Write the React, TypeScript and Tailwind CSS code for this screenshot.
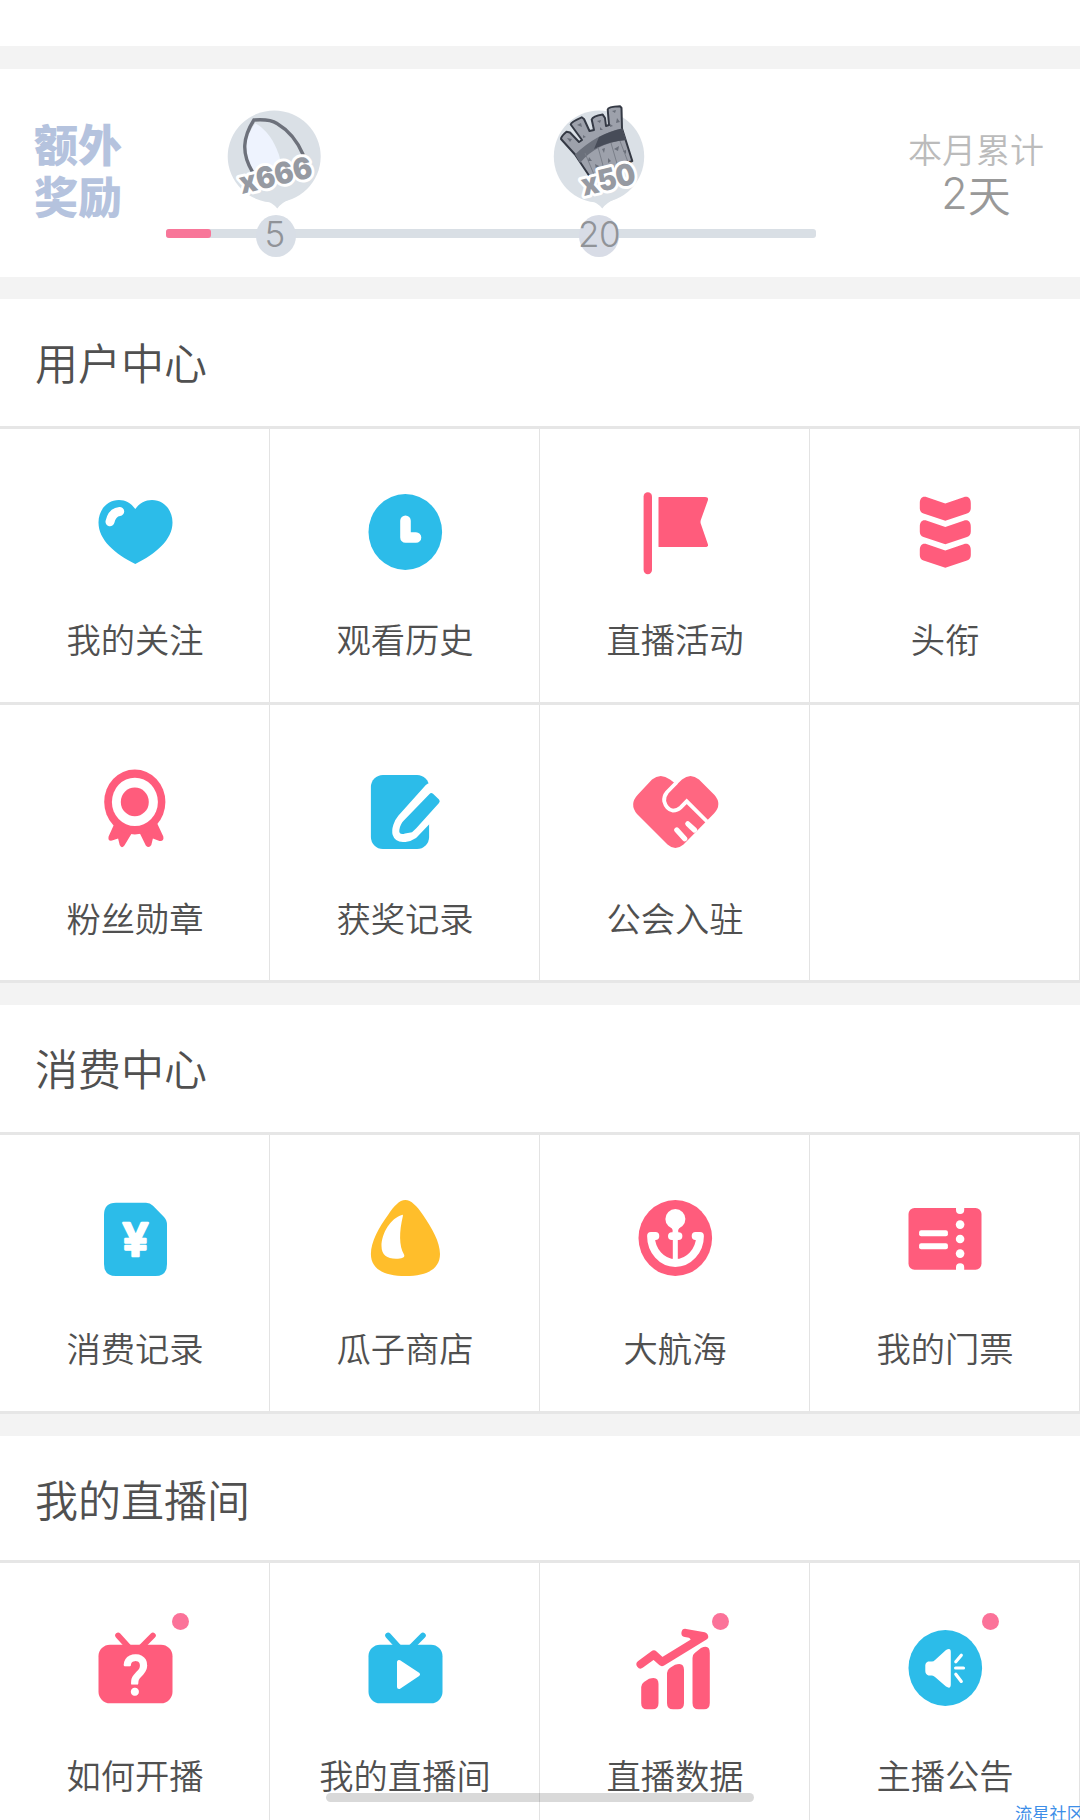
import React from 'react';

const PINK = '#ff5c7c';
const BLUE = '#2cbce9';

interface MenuItem {
  label: string;
  icon: React.ReactNode;
  dot?: boolean;
}

interface MenuRow {
  items: MenuItem[];
  // rows differ by a pixel or two in height and label spacing
  rowClass: string;
  labelClass: string;
}

interface MenuSectionProps {
  title: string;
  headerClass: string;
  rows: MenuRow[];
}

const Icon: React.FC<{ children: React.ReactNode }> = ({ children }) => (
  <svg width="99" height="100" viewBox="0 0 99 100" fill="none" className="block overflow-visible">
    {children}
  </svg>
);

const HeartIcon = () => (
  <Icon>
    <path
      d="M50.3 26C46 20 40.5 17 34 17C22 17 13.5 27 13.5 39.5C13.5 57 30 71 50.3 81C70.5 71 87.5 57 87.5 39.5C87.5 27 79 17 67 17C60.5 17 54.5 20 50.3 26Z"
      fill={BLUE}
    />
    <path d="M25 38.8C26.5 32 29.5 29 34.7 28.5" stroke="#fff" strokeWidth="9" strokeLinecap="round" />
  </Icon>
);

const ClockIcon = () => (
  <Icon>
    <ellipse cx="50.3" cy="49" rx="36.8" ry="38" fill={BLUE} />
    <path d="M50.5 37.8V54.5H61" stroke="#fff" strokeWidth="10.6" strokeLinecap="round" strokeLinejoin="round" />
  </Icon>
);

const FlagIcon = () => (
  <Icon>
    <rect x="18.6" y="9.3" width="8.4" height="82" rx="4.2" fill={PINK} />
    <path
      d="M34 14H80Q84 14 82.8 17.5L75.8 37Q75.2 38.9 75.8 40.7L82.8 61Q84 64 80 64H34Q33.5 64 33.5 63.5V14.5Q33.5 14 34 14Z"
      fill={PINK}
    />
  </Icon>
);

const Chevron: React.FC<{ y: number }> = ({ y }) => (
  <path
    transform={`translate(0 ${y})`}
    d="M24.8 20.5C24.8 15 27.5 12.8 32 14.3L50.3 20.5L68.6 14.3C73 12.8 75.8 15 75.8 20.5V25C75.8 28 74.5 29.7 72 30.5L50.3 37.7L28.5 30.5C26 29.7 24.8 28 24.8 25Z"
    fill={PINK}
  />
);

const RankIcon = () => (
  <Icon>
    <Chevron y={0} />
    <Chevron y={23.5} />
    <Chevron y={47} />
  </Icon>
);

const MedalIcon = () => (
  <Icon>
    <path
      d="M29.7 64L23.6 77.5Q22.6 82.4 27 81.6L33.1 79.6L34.7 86Q36.5 90 39.4 86.6L46.8 74.3H54.8L60.8 86.4Q63.9 90 66.3 86L67.9 79.6L74.5 82Q79.3 82.6 78.3 77.6L72 64Z"
      fill={PINK}
    />
    <ellipse cx="49.8" cy="43" rx="30.6" ry="32.4" fill={PINK} />
    <ellipse cx="49.9" cy="42.9" rx="23" ry="24.2" fill="#fff" />
    <ellipse cx="49.8" cy="42.9" rx="14" ry="14.4" fill={PINK} />
  </Icon>
);

const EditIcon = () => (
  <Icon>
    <rect x="15.9" y="16" width="58.2" height="74" rx="12" fill={BLUE} />
    <path
      d="M75.8 31L48.5 61.5C45.5 65 43.6 71 44.4 74C45.5 77.5 53 76 57 73.2L87 42Z"
      fill={BLUE}
      stroke="#fff"
      strokeWidth="14"
      strokeLinejoin="round"
    />
    <path
      d="M74.5 35Q76.1 33 78 34.8L84 40.4Q85.5 42 84 44L61 69.5L57 73.3L50 74.6C46 76 43.6 74.5 44.4 70.5C45 67 46.4 64 48.6 61.7Z"
      fill={BLUE}
    />
  </Icon>
);

const HandshakeIcon = () => (
  <Icon>
    <path
      d="M50.3 24.5L45 20.5Q35.5 13.5 27 20.5L12.5 36Q4 45.3 12 55L42.5 85.5Q50.3 92.5 58.5 85.5L89 54.5Q97.5 45.3 89.5 36L74 20.5Q65.5 13.5 57 20.5L50.3 27Z"
      fill="#ff6781"
    />
    <path d="M47 20L50.3 24.3L55 21L52 16Z" fill="#fff" />
    <path
      d="M51.5 23.5L42 33.2Q38.5 37.5 39.2 42.3Q41.3 50.5 48 51.7Q52.5 51.5 55.5 48.6L61.7 42.3L83 63.5"
      stroke="#fff"
      strokeWidth="3.8"
    />
    <path d="M51.8 71L59.7 79.8M62.8 64.8L69.5 71" stroke="#fff" strokeWidth="5.2" strokeLinecap="round" />
  </Icon>
);

const BillIcon = () => (
  <Icon>
    <path
      d="M31 13.7H61Q65 13.7 68 16.8L79 28Q82 31 82 36V75Q82 87 70.5 87H31Q19 87 19 75V26Q19 13.7 31 13.7Z"
      fill={BLUE}
    />
    <text
      x="50.5"
      y="67"
      textAnchor="middle"
      fontFamily="Roboto, sans-serif"
      fontWeight="500"
      fontSize="47"
      fill="#fff"
      stroke="#fff"
      strokeWidth="2.6"
      strokeLinejoin="round"
    >
      ¥
    </text>
  </Icon>
);

const SeedIcon = () => (
  <Icon>
    <path
      d="M50.3 11C56 11 62 17 68 26C77 39 85 53 85 65C85 80 72 87 50.5 87C29 87 15.9 80 15.9 65C15.9 53 24 38 33 26C39 17 44.5 11 50.3 11Z"
      fill="#ffbe2b"
    />
    <path
      d="M46.8 25.9C36 29 26.5 44 26.5 57C26.5 66 32 69.7 41 69.7C46.5 69.7 50.5 68.6 49 65.5C44 57 44 43 47.9 27Q48.2 25.4 46.8 25.9Z"
      fill="#fff"
    />
  </Icon>
);

const AnchorIcon = () => (
  <Icon>
    <ellipse cx="50.3" cy="49" rx="36.8" ry="38" fill={PINK} />
    <circle cx="50.4" cy="30" r="10" fill="#fff" />
    <path d="M46 38Q48 40 47.5 44H53.3Q52.8 40 55 38Z" fill="#fff" />
    <rect x="43" y="43.2" width="14.4" height="7.8" rx="3.9" fill="#fff" />
    <path d="M50.3 49V73" stroke="#fff" strokeWidth="5" />
    <path
      d="M30.4 47H26C26 62 37 74 50.3 74C63.6 74 75 62 75 47H70.6"
      stroke="#fff"
      strokeWidth="7.8"
      strokeLinecap="round"
      strokeLinejoin="round"
    />
  </Icon>
);

const TicketIcon = () => (
  <Icon>
    <rect x="13.5" y="19" width="73" height="61.7" rx="6" fill={PINK} />
    <path d="M61 18H69.2V21A4.1 4.1 0 0 1 61 21ZM61 81.5H69.2V78.3A4.1 4.1 0 0 0 61 78.3Z" fill="#fff" />
    <circle cx="65.1" cy="35.6" r="4.3" fill="#fff" />
    <circle cx="65.1" cy="50" r="4.3" fill="#fff" />
    <circle cx="65.1" cy="64.6" r="4.3" fill="#fff" />
    <rect x="24.1" y="41.3" width="28.8" height="6" rx="2" fill="#fff" />
    <rect x="24.1" y="54.3" width="28.8" height="6" rx="2" fill="#fff" />
  </Icon>
);

const Television: React.FC<{ color: string; children: React.ReactNode }> = ({ color, children }) => (
  <Icon>
    <path d="M33.1 18.5L43.5 30M67.9 18.5L56.5 30" stroke={color} strokeWidth="5.8" strokeLinecap="round" />
    <rect x="13.5" y="27.7" width="74" height="58.6" rx="11.5" fill={color} />
    {children}
  </Icon>
);

const HowToIcon = () => (
  <Television color={PINK}>
    <text
      x="50.6"
      y="77"
      textAnchor="middle"
      fontFamily="Roboto, sans-serif"
      fontWeight="400"
      fontSize="53"
      fill="#fff"
      stroke="#fff"
      strokeWidth="2.4"
      strokeLinejoin="round"
    >
      ?
    </text>
  </Television>
);

const RoomIcon = () => (
  <Television color={BLUE}>
    <path d="M44 45V70L63 57.4Z" fill="#fff" stroke="#fff" strokeWidth="4" strokeLinejoin="round" />
  </Television>
);

const ChartIcon = () => (
  <Icon>
    <path d="M16.2 70Q16.2 67 19 65L24 61.8Q33.5 58.5 33.5 67V86Q33.5 92.3 27.5 92.3H22Q16.2 92.3 16.2 86Z" fill={PINK} />
    <path d="M42 56Q42 53 44.8 51L50 47.8Q59 44.5 59 53V86Q59 92.3 53 92.3H48Q42 92.3 42 86Z" fill={PINK} />
    <path d="M67.5 41Q67.5 37.5 70 35.8L76 31Q84.8 27 84.8 36V86Q84.8 92.3 79 92.3H73.5Q67.5 92.3 67.5 86Z" fill={PINK} />
    <path
      d="M15.6 47.3L28.8 37.6L37 45L79 19.3L60.5 16"
      stroke={PINK}
      strokeWidth="8.2"
      strokeLinecap="round"
      strokeLinejoin="round"
    />
    <path d="M60.5 16L79 19.3L68 25.5Z" fill={PINK} />
  </Icon>
);

const NoticeIcon = () => (
  <Icon>
    <ellipse cx="50.3" cy="51" rx="36.8" ry="38" fill={BLUE} />
    <path
      d="M33 44.5H37Q38.5 44.5 40 43L51 33Q55.8 30 55.8 35V67.5Q55.8 72.5 51 69.5L40 60Q38.5 58.5 37 58.5H33.5Q30.3 57 30.3 54V48Q30.3 45.5 33 44.5Z"
      fill="#fff"
    />
    <path d="M60.8 44.8L66.3 38.2M60.6 51H68.5M60.8 57.3L66.3 64.4" stroke="#fff" strokeWidth="3.2" strokeLinecap="round" />
  </Icon>
);

const PrizeText: React.FC<{ x: number; y: number; length: number; children: string }> = ({ x, y, length, children }) => (
  <text
    x={x}
    y={y}
    transform={`rotate(-13.5 ${x} ${y})`}
    textLength={length}
    lengthAdjust="spacingAndGlyphs"
    fontFamily="Inter, sans-serif"
    fontWeight="900"
    fontSize="30"
    fill="#969aa2"
    stroke="#fff"
    strokeWidth="6"
    strokeLinejoin="round"
    paintOrder="stroke"
  >
    {children}
  </text>
);

const ShieldPrize = () => (
  <svg width="94" height="104" viewBox="0 0 94 104" fill="none" className="absolute left-[61px] top-0 overflow-visible">
    <ellipse cx="47.2" cy="51.5" rx="46.5" ry="46" fill="#dae0e6" />
    <path d="M38 95Q46 98 50.3 103.5Q54 98 63 94Z" fill="#dae0e6" />
    <path d="M28.3 18.3Q44 27 52 50L56 66L24 66C16 48 18 32 28.3 18.3Z" fill="#eef3fe" />
    <path
      d="M25.5 67C14 48 16 32 26.9 15C36 14.3 44 14.5 50 18.5C61 25 70 35 76.3 50"
      stroke="#6d717b"
      strokeWidth="3.4"
    />
    <PrizeText x={15} y={89} length={74}>x666</PrizeText>
  </svg>
);

const GlovePrize = () => (
  <svg width="94" height="104" viewBox="0 0 94 104" fill="none" className="absolute left-[387px] top-0 overflow-visible">
    <ellipse cx="46" cy="51.5" rx="45.2" ry="46" fill="#dae0e6" />
    <path d="M37 95Q45 98 49.3 103.5Q53 98 62 94Z" fill="#dae0e6" />
    <path
      d="M22 49.5L8 34Q8 31.5 13.5 26.8L17 27.5L26 37L29 35L17.7 19.5Q18 17 28.7 12.3L31 14L36.5 26L41 25L38.7 14.5Q40 11 49.7 9.6L52 13L53 21L56 20L54.7 4.5Q55 1.5 67 1.2L68.5 3L69 23.5L79.3 56L37 72Z"
      fill="#9da1ab"
      stroke="#343944"
      strokeWidth="2"
      strokeLinejoin="round"
    />
    <path d="M22 49.5Q43 29 69 23.5L73 35Q43 38 27 58Z" fill="#6b707b" />
    <path d="M46 32Q57 26 69 23.5L73 35Q57 36 41 44Z" fill="#474c58" />
    <path d="M32 48L42 72M45 42L52 68M58 38L65 62M67 36L75 57" stroke="#7a7f89" strokeWidth="1" />
    <path
      d="M14 33l5 1l-2 3zM24 20l4-2l1 4zM30 30l3 2l-3 1zM44 16l4-1l-1 3zM47 22l3 3l-3 0zM59 6l4-1l-1 3zM64 13l3 4l-4 1zM57 19l3 2l-3 1zM36 52l3 4l-4 0zM49 44l3-1l-1 5zM61 44l5-3l-1 5zM42 59l4 2l-3 3zM70 46l3-1l0 4zM55 53l3 3l-3 2z"
      fill="#6b707b"
    />
    <PrizeText x={31} y={91} length={55}>x50</PrizeText>
  </svg>
);

const RewardBar = () => (
  <section className="flex h-[208px] bg-white">
    <div className="w-[166px] whitespace-nowrap pl-[34px] pt-[48px] text-[44px] font-black leading-[52px] text-[#b5c3de]">
      <p>额外</p>
      <p>奖励</p>
    </div>
    <div className="relative mt-9 h-[154px] w-[650px]">
      <ShieldPrize />
      <GlovePrize />
      <div className="mt-[124px] h-[9px] rounded-[3px] bg-[#d9dfe5]">
        <div className="h-full w-[45px] rounded-[3px] bg-[#f87699]" />
      </div>
      <div className="absolute left-[90px] top-[110px] flex h-[42px] w-10 items-center justify-center rounded-[50%] bg-[#d8dee6] pb-[3px] pr-[2px] font-[Inter] text-[35px] font-light leading-none text-[#909398]">
        5
      </div>
      <div className="absolute left-[413px] top-[110px] flex h-[42px] w-10 items-center justify-center rounded-[50%] bg-[#d8dce6] pb-[3px] font-[Inter] text-[35px] font-light leading-none tracking-[-0.5px] text-[#909398]">
        20
      </div>
    </div>
    <div className="ml-[60px] mt-[58px] flex w-[200px] flex-col items-center font-[350]">
      <p className="text-[34px] leading-[44px] text-[#bbbbbb]">本月累计</p>
      <p className="flex text-[43px] leading-[44px] text-[#999999]">
        <span className="font-[Inter] font-light">2</span>天
      </p>
    </div>
  </section>
);

const MenuSection: React.FC<MenuSectionProps> = ({ title, headerClass, rows }) => (
  <section className="bg-white">
    <h2 className={`flex items-center pl-[35px] text-[43px] font-[350] text-[#505050] ${headerClass}`}>{title}</h2>
    <div className="border-t-[3px] border-[#e6e6e6]">
      {rows.map((row, index) => (
        <div key={index} className={`grid grid-cols-4 border-b-[3px] border-[#e6e6e6] ${row.rowClass}`}>
          {[0, 1, 2, 3].map(col => {
            const item = row.items[col];
            return (
              <div key={col} className="flex flex-col items-center border-r border-[#e3e3e3] pt-[54px]">
                {item && (
                  <>
                    <div className="relative">
                      {item.icon}
                      {item.dot && (
                        <span className="absolute -top-1 left-[86.5px] size-[17px] rounded-full bg-[#fb7299]" />
                      )}
                    </div>
                    <p className={`whitespace-nowrap pl-px text-[34.3px] font-[350] leading-[52px] text-[#505050] ${row.labelClass}`}>
                      {item.label}
                    </p>
                  </>
                )}
              </div>
            );
          })}
        </div>
      ))}
    </div>
  </section>
);

const sections: MenuSectionProps[] = [
  {
    title: '用户中心',
    headerClass: 'h-[127px] pb-[3px]',
    rows: [
      {
        rowClass: 'h-[276px]',
        labelClass: 'mt-[29px]',
        items: [
          { label: '我的关注', icon: <HeartIcon /> },
          { label: '观看历史', icon: <ClockIcon /> },
          { label: '直播活动', icon: <FlagIcon /> },
          { label: '头衔', icon: <RankIcon /> },
        ],
      },
      {
        rowClass: 'h-[278px]',
        labelClass: 'mt-8',
        items: [
          { label: '粉丝勋章', icon: <MedalIcon /> },
          { label: '获奖记录', icon: <EditIcon /> },
          { label: '公会入驻', icon: <HandshakeIcon /> },
        ],
      },
    ],
  },
  {
    title: '消费中心',
    headerClass: 'h-[127px] pb-[3px]',
    rows: [
      {
        rowClass: 'h-[279px]',
        labelClass: 'mt-8',
        items: [
          { label: '消费记录', icon: <BillIcon /> },
          { label: '瓜子商店', icon: <SeedIcon /> },
          { label: '大航海', icon: <AnchorIcon /> },
          { label: '我的门票', icon: <TicketIcon /> },
        ],
      },
    ],
  },
  {
    title: '我的直播间',
    headerClass: 'h-[124px]',
    rows: [
      {
        rowClass: 'h-[278px]',
        labelClass: 'mt-[31px]',
        items: [
          { label: '如何开播', icon: <HowToIcon />, dot: true },
          { label: '我的直播间', icon: <RoomIcon /> },
          { label: '直播数据', icon: <ChartIcon />, dot: true },
          { label: '主播公告', icon: <NoticeIcon />, dot: true },
        ],
      },
    ],
  },
];

export default function App() {
  return (
    <div className="relative h-[1820px] w-[1080px] overflow-hidden bg-[#f3f3f3] font-['Noto_Sans_CJK_SC',sans-serif]">
      <div className="h-[46px] bg-white" />
      <div className="mt-[23px]">
        <RewardBar />
      </div>
      <div className="mt-[22px] flex flex-col gap-[22px]">
        {sections.map(section => (
          <MenuSection key={section.title} {...section} />
        ))}
      </div>
      {/* home indicator */}
      <div className="absolute left-[326px] top-[1793px] h-[9px] w-[428px] rounded-full bg-black/15" />
      <div className="absolute left-[1015px] top-[1803px] whitespace-nowrap text-[17.3px] leading-[20px] text-[#3d8ee8]">
        流星社区
      </div>
    </div>
  );
}
